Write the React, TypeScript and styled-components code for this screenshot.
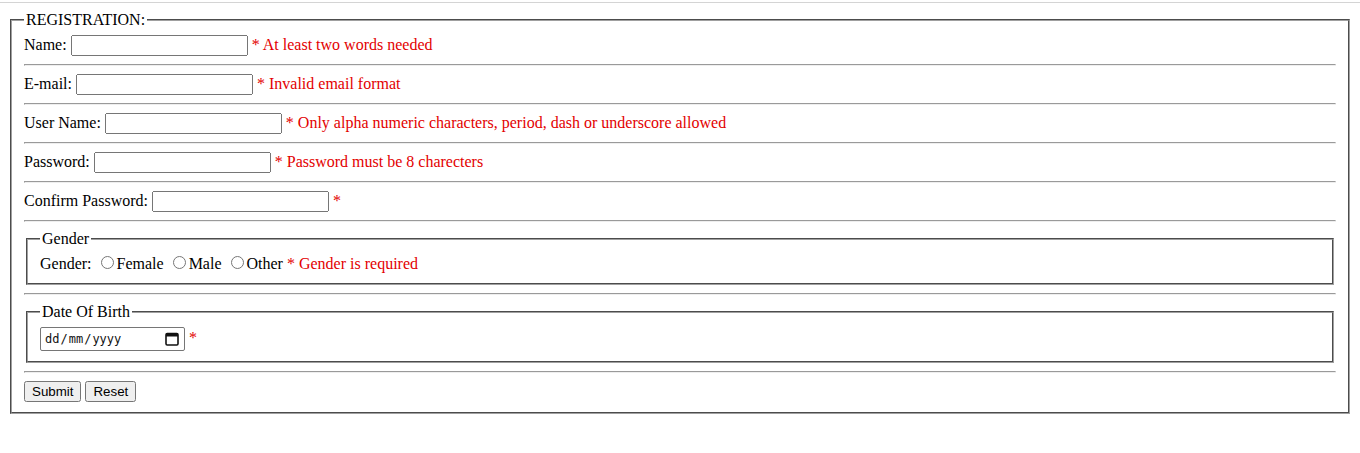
import React from "react";
import styled, { createGlobalStyle } from "styled-components";

const Global = createGlobalStyle`
  body {
    margin: 0;
    font-family: "Liberation Serif", "Times New Roman", serif;
    font-size: 16px;
    color: #000;
    background: #fff;
  }
`;

const TopRule = styled.div`
  height: 1px;
  margin-top: 2px;
  background: #d4d4d4;
`;

const Page = styled.div`
  padding: 8px;
`;

const Form = styled.form`
  margin: 0;
`;

const Fieldset = styled.fieldset`
  margin: 0 2px;
  padding: 0.35em 0.75em 0.625em;
  border: 2px groove #a0a0a0;
`;

const Legend = styled.legend`
  padding: 0 2px;
`;

const Row = styled.div``;

const Label = styled.label``;

const TextInput = styled.input`
  box-sizing: border-box;
  width: 177px;
  height: 21px;
  font-family: "Liberation Sans", Arial, sans-serif;
  font-size: 13.33px;
`;

const Error = styled.span`
  color: #e30000;
`;

const Rule = styled.hr`
  margin: 8px 0;
`;

const RadioLabel = styled.label``;

const Radio = styled.input``;

const DateField = styled.span`
  box-sizing: border-box;
  display: inline-flex;
  align-items: center;
  justify-content: space-between;
  width: 145px;
  height: 24px;
  padding: 0 5px 0 4px;
  border: 1px solid #767676;
  border-radius: 2px;
  font-family: "DejaVu Sans Mono", monospace;
  font-size: 12px;
  color: #111;
  cursor: text;
`;

const DateText = styled.span`
  display: inline-flex;
  gap: 1px;
`;

const DateIcon = styled.svg`
  width: 14px;
  height: 14px;
  flex: none;
`;

const Button = styled.button`
  font-family: "Liberation Sans", Arial, sans-serif;
  font-size: 13.33px;
`;

export default function App() {
  return (
    <>
      <Global />
      <TopRule />
      <Page>
        <Form>
          <Fieldset>
            <Legend>REGISTRATION:</Legend>
            <Row>
              <Label>Name: </Label>
              <TextInput type="text" /> <Error>* At least two words needed</Error>
            </Row>
            <Rule />
            <Row>
              <Label>E-mail: </Label>
              <TextInput type="text" /> <Error>* Invalid email format</Error>
            </Row>
            <Rule />
            <Row>
              <Label>User Name: </Label>
              <TextInput type="text" />{" "}
              <Error>* Only alpha numeric characters, period, dash or underscore allowed</Error>
            </Row>
            <Rule />
            <Row>
              <Label>Password: </Label>
              <TextInput type="password" /> <Error>* Password must be 8 charecters</Error>
            </Row>
            <Rule />
            <Row>
              <Label>Confirm Password: </Label>
              <TextInput type="password" /> <Error>*</Error>
            </Row>
            <Rule />
            <Fieldset>
              <Legend>Gender</Legend>
              <Label>Gender: </Label>
              <RadioLabel>
                <Radio type="radio" name="g" />Female
              </RadioLabel>{" "}
              <RadioLabel>
                <Radio type="radio" name="g" />Male
              </RadioLabel>{" "}
              <RadioLabel>
                <Radio type="radio" name="g" />Other
              </RadioLabel>{" "}
              <Error>* Gender is required</Error>
            </Fieldset>
            <Rule />
            <Fieldset>
              <Legend>Date Of Birth</Legend>
              <DateField>
                <DateText>
                  <span>dd</span>
                  <span>/</span>
                  <span>mm</span>
                  <span>/</span>
                  <span>yyyy</span>
                </DateText>
                <DateIcon viewBox="0 0 14 14">
                  <rect x="1" y="1.5" width="12" height="11.5" rx="1.2" fill="none" stroke="#111" strokeWidth="1.6" />
                  <rect x="1" y="1.5" width="12" height="3" fill="#111" />
                </DateIcon>
              </DateField>{" "}
              <Error>*</Error>
            </Fieldset>
            <Rule />
            <Button type="submit">Submit</Button> <Button type="reset">Reset</Button>
          </Fieldset>
        </Form>
      </Page>
    </>
  );
}
